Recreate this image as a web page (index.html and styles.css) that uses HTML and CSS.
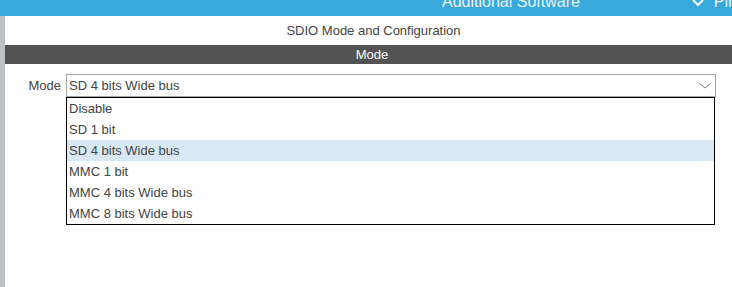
FILE: index.html
```
<!DOCTYPE html>
<html>
<head>
    <meta charset="UTF-8">
    <title>SDIO Mode and Configuration</title>
    <link rel="stylesheet" href="styles.css">
</head>
<body>
    <div class="topbar">
        <div class="tabs">
            <span class="tab">Additional Software</span>
            <svg class="tabArrow" width="12" height="7" viewBox="0 0 12 7">
                <polyline points="1,0 6,5 11,0" fill="none" stroke="#fff" stroke-width="2"/>
            </svg>
            <span class="tab">Pinout</span>
        </div>
    </div>
    <div class="main">
        <div class="stripe"></div>
        <div class="panel">
            <div class="title">SDIO Mode and Configuration</div>
            <div class="section">Mode</div>
            <div class="row">
                <label class="label">Mode</label>
                <div class="field">
                    <div class="select">
                        <span>SD 4 bits Wide bus</span>
                        <svg width="12" height="6" viewBox="0 0 12 6">
                            <polyline points="0.5,0.5 6,5 11.5,0.5" fill="none" stroke="#777" stroke-width="1"/>
                        </svg>
                    </div>
                    <ul class="options">
                        <li>Disable</li>
                        <li>SD 1 bit</li>
                        <li class="selected">SD 4 bits Wide bus</li>
                        <li>MMC 1 bit</li>
                        <li>MMC 4 bits Wide bus</li>
                        <li>MMC 8 bits Wide bus</li>
                    </ul>
                </div>
            </div>
        </div>
    </div>
</body>
</html>
```
FILE: styles.css
```
body {
    margin: 0;
    font-family: "Liberation Sans", Arial, sans-serif;
    font-size: 13px;
    color: #444;
    background: #fff;
}
.topbar {
    height: 16px;
    background: #39a8db;
    overflow: hidden;
}
.tabs {
    display: flex;
    align-items: flex-start;
    padding-left: 442px;
    margin-top: -7px;
    white-space: nowrap;
}
.tab {
    flex-shrink: 0;
    font-size: 16px;
    line-height: 18px;
    color: #e8f4fa;
}
.tabArrow {
    flex-shrink: 0;
    margin: 7px 10px 0 112px;
}
.main {
    display: flex;
    height: 271px;
}
.stripe {
    width: 5px;
    background: #b8c3c9;
}
.panel {
    flex: 1;
}
.title {
    text-align: center;
    padding-left: 10px;
    height: 29px;
    line-height: 29px;
}
.section {
    background: #535353;
    color: #fff;
    text-align: center;
    padding-left: 7px;
    height: 19px;
    line-height: 19px;
}
.row {
    display: flex;
    margin-top: 10px;
}
.label {
    width: 56px;
    text-align: right;
    padding-right: 5px;
    line-height: 23px;
}
.field {
    width: 650px;
}
.select {
    height: 21px;
    border: 1px solid #a6a6a6;
    display: flex;
    align-items: center;
    justify-content: space-between;
    padding: 0 4px 0 2px;
}
.options {
    list-style: none;
    margin: 0;
    padding: 0;
    width: 647px;
    border: 1px solid #000;
}
.options li {
    height: 21px;
    line-height: 21px;
    padding-left: 2px;
}
.options .selected {
    background: #d9e8f5;
}
```
